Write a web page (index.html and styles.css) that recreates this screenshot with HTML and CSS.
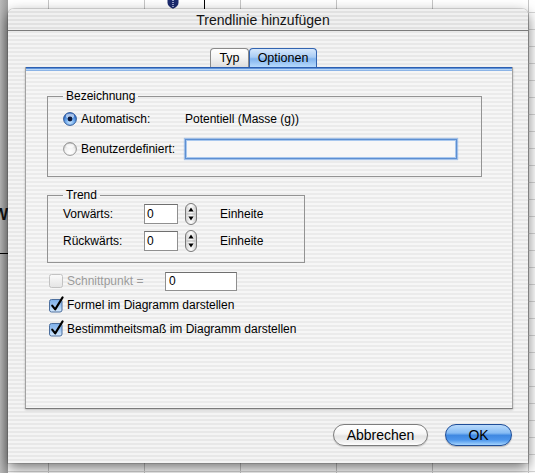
FILE: index.html
```html
<!DOCTYPE html>
<html lang="de">
<head>
<meta charset="utf-8">
<title>Trendlinie hinzufügen</title>
<link rel="stylesheet" href="styles.css">
</head>
<body>
<div class="desktop">
  <svg class="defs" width="0" height="0" aria-hidden="true">
    <defs>
      <radialGradient id="radioOn" cx="50%" cy="75%" r="65%">
        <stop offset="0" stop-color="#c9e6ff"/>
        <stop offset="0.55" stop-color="#6aa6ea"/>
        <stop offset="1" stop-color="#2a66c4"/>
      </radialGradient>
      <radialGradient id="radioOff" cx="50%" cy="75%" r="70%">
        <stop offset="0" stop-color="#ffffff"/>
        <stop offset="0.6" stop-color="#f1f1f1"/>
        <stop offset="1" stop-color="#c4c4c4"/>
      </radialGradient>
      <linearGradient id="checkOn" x1="0" y1="0" x2="0" y2="1">
        <stop offset="0" stop-color="#7fb0ea"/>
        <stop offset="0.5" stop-color="#9cc4f2"/>
        <stop offset="1" stop-color="#d9ebfc"/>
      </linearGradient>
      <linearGradient id="checkOff" x1="0" y1="0" x2="0" y2="1">
        <stop offset="0" stop-color="#fbfbfb"/>
        <stop offset="1" stop-color="#e4e4e4"/>
      </linearGradient>
      <linearGradient id="stepper" x1="0" y1="0" x2="1" y2="0">
        <stop offset="0" stop-color="#cfcfcf"/>
        <stop offset="0.5" stop-color="#ffffff"/>
        <stop offset="1" stop-color="#c9c9c9"/>
      </linearGradient>
    </defs>
  </svg>

  <svg class="sheet-shield" width="12" height="10" viewBox="0 0 12 10" aria-hidden="true">
    <path d="M0.5 0 H11.5 V3.5 Q11.5 7.5 6 9.8 Q0.5 7.5 0.5 3.5 Z" fill="#1b2a6e"/>
    <path d="M6 1 V8.5" stroke="#c9d3f0" stroke-width="1.4" stroke-dasharray="1 1"/>
  </svg>
  <div class="sheet-vline"></div>
  <div class="sheet-w">W</div>
  <div class="sheet-hline"></div>

  <div class="window">
    <div class="titlebar">Trendlinie hinzufügen</div>
    <div class="content">
      <div class="tabs">
        <div class="tab tab-typ">Typ</div>
        <div class="tab tab-active">Optionen</div>
      </div>
      <div class="panel">
        <fieldset class="group group-name">
          <legend>Bezeichnung</legend>
          <div class="radio-row">
            <svg class="radio" width="14" height="14" viewBox="0 0 14 14">
              <circle cx="7" cy="7" r="6.4" fill="url(#radioOn)" stroke="#28508f" stroke-width="0.9"/>
              <ellipse cx="7" cy="3.9" rx="4.2" ry="2.3" fill="#ffffff" opacity="0.55"/>
              <circle cx="7" cy="7" r="2.4" fill="#0e1a3c"/>
            </svg>
            <span class="rlabel">Automatisch:</span>
            <span class="value">Potentiell (Masse (g))</span>
          </div>
          <div class="radio-row radio-row-2">
            <svg class="radio" width="14" height="14" viewBox="0 0 14 14">
              <circle cx="7" cy="7" r="6.4" fill="url(#radioOff)" stroke="#8a8a8a" stroke-width="0.9"/>
              <ellipse cx="7" cy="3.8" rx="4" ry="2" fill="#ffffff" opacity="0.7"/>
            </svg>
            <span class="rlabel">Benutzerdefiniert:</span>
            <div class="field field-focus"></div>
          </div>
        </fieldset>

        <fieldset class="group group-trend">
          <legend>Trend</legend>
          <div class="trend-row">
            <span class="tlabel">Vorwärts:</span>
            <div class="field field-num">0</div>
            <svg class="stepper" width="12" height="22" viewBox="0 0 12 22">
              <rect x="0.5" y="0.5" width="11" height="21" rx="5.5" fill="url(#stepper)" stroke="#7a7a7a"/>
              <path d="M6 4.5 L8.6 8.5 H3.4 Z" fill="#000"/>
              <path d="M6 17.5 L8.6 13.5 H3.4 Z" fill="#000"/>
              <line x1="1.5" y1="11" x2="10.5" y2="11" stroke="#b3b3b3"/>
            </svg>
            <span class="unit">Einheite</span>
          </div>
          <div class="trend-row trend-row-2">
            <span class="tlabel">Rückwärts:</span>
            <div class="field field-num">0</div>
            <svg class="stepper" width="12" height="22" viewBox="0 0 12 22">
              <rect x="0.5" y="0.5" width="11" height="21" rx="5.5" fill="url(#stepper)" stroke="#7a7a7a"/>
              <path d="M6 4.5 L8.6 8.5 H3.4 Z" fill="#000"/>
              <path d="M6 17.5 L8.6 13.5 H3.4 Z" fill="#000"/>
              <line x1="1.5" y1="11" x2="10.5" y2="11" stroke="#b3b3b3"/>
            </svg>
            <span class="unit">Einheite</span>
          </div>
        </fieldset>

        <div class="check-row check-row-first disabled">
          <svg class="check" width="14" height="14" viewBox="0 0 14 14">
            <rect x="0.5" y="0.5" width="13" height="13" rx="2" fill="url(#checkOff)" stroke="#c2c2c2"/>
          </svg>
          <span class="clabel clabel-fixed">Schnittpunkt =</span>
          <div class="field field-intercept">0</div>
        </div>
        <div class="check-row">
          <svg class="check" width="14" height="14" viewBox="0 0 14 14" overflow="visible">
            <rect x="0.5" y="1.5" width="12.5" height="12.5" rx="2" fill="url(#checkOn)" stroke="#4c6f9e"/>
            <path d="M3.2 7.6 L6.2 11.4 L13.6 -0.6" fill="none" stroke="#000" stroke-width="2.1" stroke-linecap="round" stroke-linejoin="round"/>
          </svg>
          <span class="clabel">Formel im Diagramm darstellen</span>
        </div>
        <div class="check-row">
          <svg class="check" width="14" height="14" viewBox="0 0 14 14" overflow="visible">
            <rect x="0.5" y="1.5" width="12.5" height="12.5" rx="2" fill="url(#checkOn)" stroke="#4c6f9e"/>
            <path d="M3.2 7.6 L6.2 11.4 L13.6 -0.6" fill="none" stroke="#000" stroke-width="2.1" stroke-linecap="round" stroke-linejoin="round"/>
          </svg>
          <span class="clabel">Bestimmtheitsmaß im Diagramm darstellen</span>
        </div>
      </div>
      <div class="buttons">
        <div class="btn btn-cancel">Abbrechen</div>
        <div class="btn btn-ok">OK</div>
      </div>
    </div>
  </div>
</div>
</body>
</html>
```

FILE: styles.css
```css
* { box-sizing: border-box; }

html, body {
  margin: 0;
  padding: 0;
}

body {
  font-family: "Liberation Sans", Arial, sans-serif;
  font-size: 12px;
  color: #000;
}

.desktop {
  position: relative;
  width: 535px;
  height: 473px;
  overflow: hidden;
  padding: 9px 0 0 8px;
  background:
    linear-gradient(to right, #bababa, #9c9c9c) 0 0 / 8px 100% no-repeat,
    repeating-linear-gradient(to bottom, transparent 0 12px, #d6d6d6 12px 13px, transparent 13px 17px),
    repeating-linear-gradient(to right, transparent 0 48px, #c6c6c6 48px 49px, transparent 49px 96px),
    #ffffff;
}

.defs {
  display: block;
  width: 0;
  height: 0;
  overflow: hidden;
}

/* spreadsheet fragments visible behind the sheet */
.sheet-shield {
  position: absolute;
  left: 167px;
  top: -1px;
}

.sheet-vline {
  position: absolute;
  left: 204px;
  top: 0;
  width: 1px;
  height: 10px;
  background: #000;
}

.sheet-w {
  position: absolute;
  left: -7px;
  top: 206px;
  font-size: 16px;
  font-weight: bold;
  color: #111;
  line-height: 17px;
}

.sheet-hline {
  position: absolute;
  left: 0;
  top: 253px;
  width: 8px;
  height: 1px;
  background: #000;
}

/* window */
.window {
  position: relative;
  z-index: 1;
  width: 520px;
  height: 454px;
  border-radius: 6px 6px 0 0;
  overflow: hidden;
  background: repeating-linear-gradient(to bottom, #f4f4f4 0 2px, #e8e8e8 2px 4px);
  box-shadow: 0 0 0 1px rgba(0, 0, 0, 0.12), 0 5px 14px rgba(0, 0, 0, 0.55);
}

.titlebar {
  height: 22px;
  border-bottom: 1px solid #7b7b7b;
  padding-right: 10px;
  text-align: center;
  line-height: 22px;
  font-size: 14px;
  color: #141414;
  background: repeating-linear-gradient(to bottom, #f0f0f0 0 2px, #e1e1e1 2px 4px);
}

.content {
  padding: 17px 16px 0 17px;
}

/* tabs */
.tabs {
  display: flex;
  height: 19px;
  margin-left: 185px;
}

.tab {
  height: 19px;
  line-height: 18px;
  text-align: center;
  font-size: 12.5px;
  border: 1px solid #8a8a8a;
  border-bottom: 0;
  border-radius: 4px 4px 0 0;
  background: linear-gradient(#ffffff, #f3f3f3 50%, #dddddd);
}

.tab-typ {
  width: 39px;
}

.tab-active {
  width: 68px;
  border-color: #3364b0;
  background: linear-gradient(#d6e8fc 0%, #a9ccf4 45%, #82b4ee 55%, #b7dafc 100%);
}

/* panel */
.panel {
  width: 488px;
  height: 342px;
  padding: 22px 21px 0 21px;
  border: 1px solid #a2a2a2;
  border-top: 0;
  border-bottom-color: #7a7a7a;
  background:
    linear-gradient(#2d5fb1 0 1px, #5f93d8 1px 2px, #b8d5f6 2px 3px, #8cb4e6 3px 4px, transparent 4px) 0 0 / 100% 4px no-repeat,
    repeating-linear-gradient(to bottom, #f6f6f6 0 2px, #ebebeb 2px 4px);
  box-shadow: 0 1px 2px rgba(0, 0, 0, 0.22);
}

.group {
  margin: 0;
  border: 1px solid #939393;
  min-width: 0;
}

.group legend {
  padding: 0 3px;
  line-height: 14px;
  font-size: 12px;
}

.group-name {
  width: 435px;
  padding: 6px 15px 17px 15px;
}

.radio-row {
  display: flex;
  align-items: center;
  height: 20px;
}

.radio-row-2 {
  margin-top: 10px;
}

.radio {
  flex: none;
  display: block;
}

.rlabel {
  width: 104px;
  margin-left: 4px;
  flex: none;
}

.field {
  background: #fff;
  border: 1px solid #8f8f8f;
  border-top-color: #6f6f6f;
}

.field-focus {
  width: 272px;
  height: 20px;
  border: 1px solid #5d8fd2;
  box-shadow: inset 0 0 0 1px #a9c8ee, 0 0 1px 1px rgba(110, 160, 225, 0.6);
  background: #f7f7f7;
}

.group-trend {
  width: 258px;
  margin-top: 11px;
  padding: 1px 15px 10px 15px;
}

.trend-row {
  display: flex;
  align-items: center;
  height: 22px;
}

.trend-row-2 {
  margin-top: 5px;
}

.tlabel {
  width: 81px;
  flex: none;
}

.field-num {
  width: 34px;
  height: 20px;
  line-height: 18px;
  padding-left: 2px;
}

.stepper {
  display: block;
  margin-left: 7px;
  flex: none;
}

.unit {
  margin-left: 23px;
}

/* check rows */
.check-row {
  display: flex;
  align-items: center;
  height: 20px;
  margin-left: 2px;
  margin-top: 4px;
}

.check-row-first {
  margin-top: 8px;
}

.check {
  display: block;
  flex: none;
}

.clabel {
  margin-left: 4px;
}

.clabel-fixed {
  width: 98px;
  flex: none;
}

.disabled .clabel {
  color: #9b9b9b;
}

.field-intercept {
  width: 72px;
  height: 19px;
  line-height: 17px;
  padding-left: 3px;
}

/* buttons */
.buttons {
  display: flex;
  justify-content: flex-end;
  gap: 17px;
  margin-top: 15px;
}

.btn {
  height: 22px;
  line-height: 20px;
  border-radius: 11px;
  text-align: center;
  font-size: 14px;
}

.btn-cancel {
  width: 95px;
  border: 1px solid #7c7c7c;
  background: linear-gradient(#ffffff 0%, #f6f6f6 45%, #e3e3e3 55%, #f2f2f2 85%, #ffffff 100%);
  box-shadow: 0 1px 1px rgba(0, 0, 0, 0.18);
}

.btn-ok {
  width: 67px;
  border: 1px solid #1e4d98;
  background: linear-gradient(#b9dafc 0%, #86bcf4 40%, #3f88e1 52%, #4d96ec 75%, #a4d4fd 100%);
  box-shadow: 0 1px 1px rgba(0, 0, 0, 0.25);
}
```
